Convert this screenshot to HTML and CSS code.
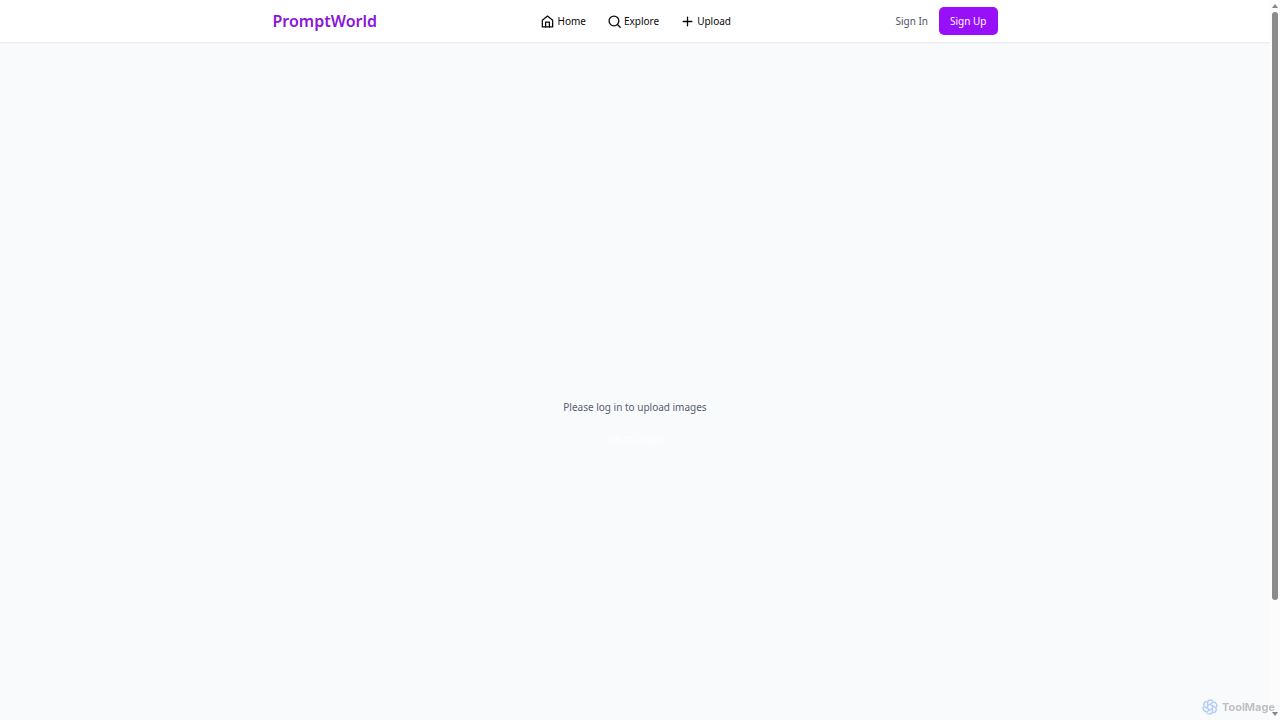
FILE: index.html
```html
<!DOCTYPE html>
<html lang="en">
<head>
    <meta charset="UTF-8">
    <meta name="viewport" content="width=device-width, initial-scale=1.0">
    <title>PromptWorld</title>
    <link rel="stylesheet" href="styles.css">
</head>
<body>
    <div class="page">
        <header class="header">
            <div class="container">
                <a href="#" class="logo">PromptWorld</a>
                <nav class="nav">
                    <a href="#">
                        <svg class="icon" viewBox="0 0 24 24"><path d="M2.500 9.500 12 2l9.500 7.500V22h-19z"/><path d="M8.500 22v-9h7v9"/></svg>
                        Home
                    </a>
                    <a href="#">
                        <svg class="icon" viewBox="0 0 24 24"><circle cx="11" cy="11" r="9"/><path d="m17.500 17.500 5 5"/></svg>
                        Explore
                    </a>
                    <a href="#">
                        <svg class="icon" viewBox="0 0 24 24"><path d="M12 4v16M4 12h16"/></svg>
                        Upload
                    </a>
                </nav>
                <div class="actions">
                    <a href="#" class="sign-in">Sign In</a>
                    <button type="button" class="btn btn-primary">Sign Up</button>
                </div>
            </div>
        </header>

        <main class="content">
            <p>Please log in to upload images</p>
            <button type="button" class="btn btn-login">Go to Login</button>
        </main>
    </div>

    <div class="scrollbar">
        <svg class="arrow" viewBox="0 0 6 4"><path d="M0 4 3 0l3 4z"/></svg>
        <div class="track"><div class="thumb"></div></div>
        <svg class="arrow" viewBox="0 0 6 4"><path d="M0 0h6L3 4z"/></svg>
    </div>

    <div class="badge">
        <svg class="badge-icon" viewBox="0 0 32 32">
            <defs>
                <path id="petal" d="M11 19V8C11 1 20 0 22.500 5"/>
            </defs>
            <use href="#petal"/>
            <use href="#petal" transform="rotate(60 16 16)"/>
            <use href="#petal" transform="rotate(120 16 16)"/>
            <use href="#petal" transform="rotate(180 16 16)"/>
            <use href="#petal" transform="rotate(240 16 16)"/>
            <use href="#petal" transform="rotate(300 16 16)"/>
        </svg>
        <span>ToolMage</span>
    </div>
</body>
</html>
```

FILE: styles.css
```css
* {
    box-sizing: border-box;
}

body {
    font-family: "Noto Sans", "Open Sans", sans-serif;
    font-size: 10px;
    line-height: 16px;
    background-color: #f9fafc;
    margin: 0;
    display: flex;
    height: 100vh;
    overflow: hidden;
}

a {
    color: inherit;
    text-decoration: none;
}

.page {
    flex: 1;
    display: flex;
    flex-direction: column;
}

.header {
    background-color: #ffffff;
    border-bottom: 1px solid #eaecef;
    box-shadow: 0 1px 1px rgba(0, 0, 0, 0.02);
}

.container {
    max-width: 747px;
    margin: 0 auto;
    padding: 7px 11px;
    display: flex;
    align-items: center;
    justify-content: space-between;
}

.logo {
    font-size: 16px;
    font-weight: 600;
    line-height: 28px;
    color: #8a16d8;
}

.nav {
    display: flex;
    gap: 22px;
    color: #0a0a0a;
}

.nav a {
    display: flex;
    align-items: center;
    gap: 3px;
}

.icon {
    width: 13px;
    height: 13px;
    fill: none;
    stroke: currentColor;
    stroke-width: 2.4;
    stroke-linecap: round;
    stroke-linejoin: round;
}

.actions {
    display: flex;
    align-items: center;
    gap: 11px;
}

.sign-in {
    color: #4a5565;
}

.btn {
    font: inherit;
    color: #ffffff;
    border: none;
    border-radius: 5px;
    padding: 6px 11px;
    cursor: pointer;
}

.btn-primary {
    background-color: #980ffa;
}

.btn-login {
    background-color: transparent;
}

.content {
    flex: 1;
    display: flex;
    flex-direction: column;
    align-items: center;
    justify-content: center;
    gap: 10px;
    padding-top: 88px;
}

.content p {
    margin: 0;
    color: #566070;
}

.scrollbar {
    width: 10px;
    background-color: #fcfcfc;
    padding: 4px 2px;
    display: flex;
    flex-direction: column;
    align-items: center;
    gap: 4px;
}

.arrow {
    width: 6px;
    height: 4px;
    fill: #858585;
}

.track {
    flex: 1;
    width: 100%;
    padding-bottom: 4px;
}

.thumb {
    height: 85%;
    border-radius: 3px;
    background-color: #8b8b8b;
}

.badge {
    position: fixed;
    right: 5px;
    bottom: 5px;
    display: flex;
    align-items: center;
    gap: 4px;
    font-family: Inter, sans-serif;
    font-size: 11px;
    font-weight: 700;
    color: #bdbfc1;
}

.badge-icon {
    width: 16px;
    height: 16px;
    fill: none;
    stroke: #b5ccf5;
    stroke-width: 3;
    stroke-linejoin: round;
}
```
